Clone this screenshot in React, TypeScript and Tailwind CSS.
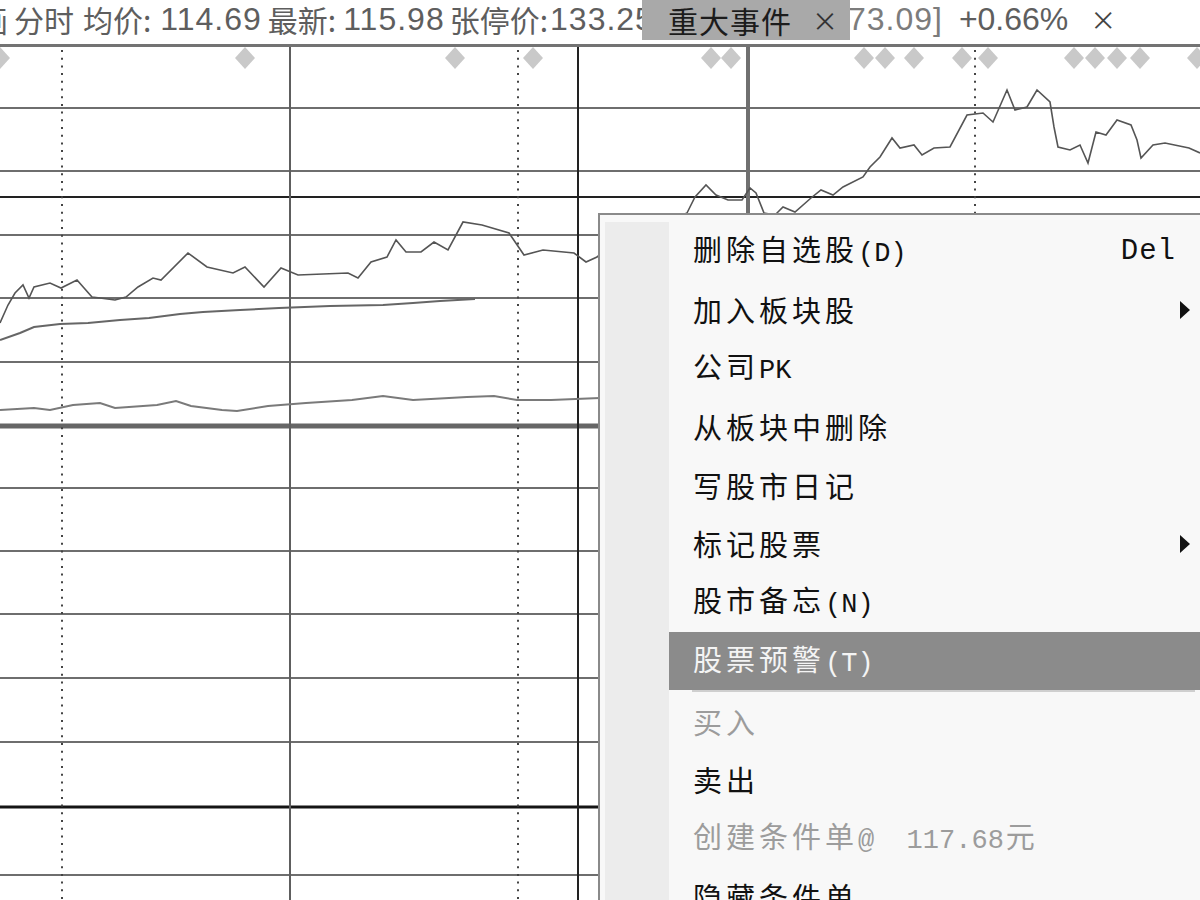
import React from 'react';

type Pt = [number, number];

// intraday price line (page coordinates)
const price: Pt[] = [
  [0, 323], [8, 305], [15, 293], [23, 285], [29, 298], [34, 287], [50, 283], [61, 288], [77, 280], [92, 297],
  [100, 298], [115, 300], [126, 297], [138, 287], [153, 278], [161, 280], [188, 253], [207, 267], [233, 273],
  [245, 267], [264, 287], [281, 268], [298, 275], [348, 273], [358, 278], [371, 262], [387, 257], [396, 240],
  [406, 252], [421, 252], [434, 242], [448, 250], [463, 222], [482, 225], [509, 233], [524, 255], [543, 250],
  [574, 253], [586, 262], [597, 257], [610, 245], [640, 240], [660, 225], [687, 213], [695, 197], [706, 185],
  [716, 195], [728, 200], [742, 200], [750, 188], [756, 193], [764, 213], [775, 215], [783, 207], [795, 212],
  [811, 198], [821, 190], [833, 195], [843, 187], [863, 177], [870, 167], [880, 157], [892, 138], [900, 148],
  [914, 145], [922, 155], [934, 148], [950, 147], [967, 115], [983, 113], [993, 122], [1007, 90], [1015, 110],
  [1027, 107], [1037, 90], [1050, 102], [1054, 127], [1058, 147], [1070, 150], [1080, 145], [1088, 163],
  [1096, 132], [1106, 135], [1117, 120], [1131, 125], [1137, 140], [1141, 158], [1153, 145], [1165, 143],
  [1189, 148], [1200, 153],
];

const avg: Pt[] = [
  [0, 340], [20, 333], [34, 327], [60, 324], [88, 323], [120, 320], [149, 318], [180, 314], [203, 312],
  [240, 310], [279, 308], [330, 306], [383, 305], [413, 303], [440, 301], [475, 299],
];

const lower: Pt[] = [
  [0, 410], [34, 408], [50, 410], [73, 405], [100, 403], [115, 408], [157, 405], [176, 401], [191, 406],
  [222, 410], [237, 411], [268, 406], [306, 403], [352, 400], [383, 396], [413, 400], [467, 397], [494, 396],
  [517, 400], [551, 400], [600, 398],
];

const diamonds = [0, 245, 455, 533, 711, 731, 864, 885, 914, 962, 988, 1074, 1095, 1117, 1140, 1197];

const hLines = [108, 171, 235, 298, 362, 488, 551, 614, 678, 742, 875];
const dotted = [62, 518, 975];

const pts = (p: Pt[]) => p.map((q) => q.join(',')).join(' ');

interface MenuItem {
  text?: string;
  latin?: string;
  tail?: string;
  shortcut?: string;
  arrow?: boolean;
  active?: boolean;
  disabled?: boolean;
  separator?: boolean;
}

const items: MenuItem[] = [
  { text: '删除自选股', latin: '(D)', shortcut: 'Del' },
  { text: '加入板块股', arrow: true },
  { text: '公司', latin: 'PK' },
  { text: '从板块中删除' },
  { text: '写股市日记' },
  { text: '标记股票', arrow: true },
  { text: '股市备忘', latin: '(N)' },
  { text: '股票预警', latin: '(T)', active: true },
  { separator: true },
  { text: '买入', disabled: true },
  { text: '卖出' },
  { text: '创建条件单', latin: '@  117.68', tail: '元', disabled: true },
  { text: '隐藏条件单' },
];

const cjk = { fontFamily: '"Noto Sans CJK SC", "Liberation Sans", sans-serif' };
const mono = { fontFamily: '"Liberation Mono", "Noto Sans CJK SC", monospace' };

function Chart() {
  return (
    <svg width={1200} height={853} viewBox="0 47 1200 853" className="block">
      {hLines.map((y) => (
        <line key={y} x1={0} x2={1200} y1={y} y2={y} stroke="#6e6e6e" strokeWidth={2} />
      ))}
      <line x1={0} x2={1200} y1={197} y2={197} stroke="#222" strokeWidth={2} />
      <line x1={0} x2={1200} y1={426} y2={426} stroke="#666" strokeWidth={5} />
      <line x1={0} x2={1200} y1={807} y2={807} stroke="#151515" strokeWidth={3} />

      {dotted.map((x) => (
        <line key={x} x1={x} x2={x} y1={50} y2={900} stroke="#444" strokeWidth={2} strokeDasharray="2 5.7" />
      ))}
      <line x1={290} x2={290} y1={47} y2={900} stroke="#5e5e5e" strokeWidth={2} />
      <line x1={578} x2={578} y1={47} y2={900} stroke="#222" strokeWidth={2} />
      <line x1={748} x2={748} y1={47} y2={900} stroke="#707070" strokeWidth={4} />

      <polyline points={pts(avg)} fill="none" stroke="#666" strokeWidth={2} />
      <polyline points={pts(lower)} fill="none" stroke="#7a7a7a" strokeWidth={2} />
      <polyline points={pts(price)} fill="none" stroke="#555" strokeWidth={1.6} strokeLinejoin="miter" />

      {diamonds.map((x) => (
        <polygon key={x} points={`${x},47 ${x + 10},58 ${x},69 ${x - 10},58`} fill="#c9c9c9" />
      ))}
    </svg>
  );
}

function Header() {
  const num = 'text-[32px] tracking-[1px] font-["Liberation_Sans"]';
  return (
    <header className="relative h-[47px] border-b-[3px] border-[#737373] bg-white">
      <div className="flex h-[38px] items-center whitespace-nowrap text-[30px] leading-none text-[#5e5e5e]" style={cjk}>
        <span className="ml-[-22px]">画</span>
        <span className="ml-[6px]">分时</span>
        <span className="ml-[9px]">均价:</span>
        <span className={`ml-[9px] ${num}`}>114.69</span>
        <span className="ml-[6px]">最新:</span>
        <span className={`ml-[7px] ${num}`}>115.98</span>
        <span className="ml-[5px]">张停价:</span>
        <span className={`ml-[2px] ${num}`}>133.25</span>
        <span className={`ml-[194px] text-[#7c7c7c] ${num}`}>73.09]</span>
        <span className={`ml-[16px] tracking-[0px] text-[32px] font-["Liberation_Sans"]`}>+0.66%</span>
        <span className="ml-[22px] text-[26px] text-[#444]">×</span>
      </div>
      <div className="absolute left-[642px] top-0 flex h-[40px] w-[208px] items-center bg-[#a9a9a9] text-[30px] leading-none text-[#1c1c1c]" style={cjk}>
        <span className="ml-[26px] tracking-[1px]">重大事件</span>
        <span className="ml-[20px] text-[26px] text-[#333]">×</span>
      </div>
    </header>
  );
}

function ContextMenu() {
  return (
    <div className="absolute left-[598px] top-[213px] flex h-[700px] w-[602px] border-l-2 border-t-2 border-[#8a8a8a] bg-[#f8f8f8] pl-[5px] pt-[7px]">
      <div className="w-[64px] shrink-0 bg-[#ececec]" />
      <div className="flex flex-1 flex-col">
        {items.map((it, i) =>
          it.separator ? (
            <div key={i} className="flex h-[12px] items-center pl-[23px] pr-[5px]">
              <div className="h-[2px] w-full bg-[#cfcfcf]" />
            </div>
          ) : (
            <div
              key={i}
              className={`flex h-[58.5px] shrink-0 items-center justify-between pl-[24px] whitespace-nowrap ${
                it.active ? 'bg-[#8b8b8b] text-[#f4f4f4]' : it.disabled ? 'text-[#9c9c9c]' : 'text-[#111]'
              }`}
            >
              <div className="flex items-baseline leading-none">
                <span className="text-[29px] tracking-[4px]" style={cjk}>{it.text}</span>
                {it.latin && (
                  <span className="text-[27px] whitespace-pre" style={mono}>{it.latin}</span>
                )}
                {it.tail && (
                  <span className="ml-[2px] text-[29px]" style={cjk}>{it.tail}</span>
                )}
              </div>
              {it.shortcut && (
                <span className="pr-[24px] text-[29px] tracking-[1px] text-[#111]" style={mono}>{it.shortcut}</span>
              )}
              {it.arrow && (
                <svg width={10} height={18} viewBox="0 0 10 18" className="mr-[10px]">
                  <polygon points="0,0 10,9 0,18" fill="#111" />
                </svg>
              )}
            </div>
          )
        )}
      </div>
    </div>
  );
}

export default function App() {
  return (
    <div className="relative h-[900px] w-[1200px] overflow-hidden bg-white">
      <Header />
      <Chart />
      <ContextMenu />
    </div>
  );
}
